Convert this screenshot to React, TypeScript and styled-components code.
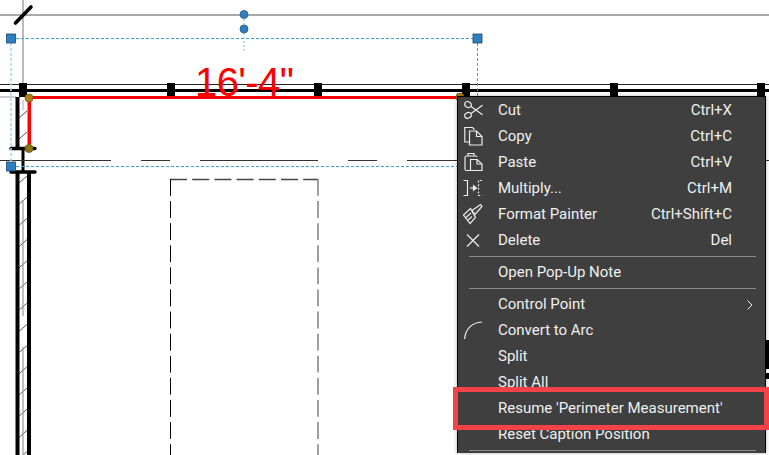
import React from 'react';
import styled, { createGlobalStyle } from 'styled-components';

const GlobalStyle = createGlobalStyle`
  html, body {
    margin: 0;
    padding: 0;
    background: #ffffff;
  }
`;

const TICKS = [19, 167, 314, 462, 610, 757];
const HATCH = Array.from({ length: 14 }, (_, i) => 176 + i * 21.2);

const FloorPlan = () => (
  <Drawing viewBox="0 0 769 455" width="769" height="455">
    {/* reference lines */}
    <line x1="0" y1="15" x2="769" y2="15" stroke="#8c8c8c" strokeWidth="1.4" />
    <line x1="23" y1="0" x2="23" y2="97" stroke="#8c8c8c" strokeWidth="1.2" />
    <line x1="15.5" y1="23" x2="31" y2="7" stroke="#000" strokeWidth="3.6" strokeLinecap="round" />

    {/* top wall */}
    <line x1="0" y1="84.5" x2="769" y2="84.5" stroke="#222" strokeWidth="1.2" />
    <line x1="0" y1="90.5" x2="769" y2="90.5" stroke="#000" strokeWidth="3" />
    <line x1="0" y1="97" x2="16" y2="97" stroke="#999" strokeWidth="1" />
    {TICKS.map((x) => (
      <rect key={x} x={x} y="83" width="8" height="14" fill="#000" />
    ))}

    {/* left wall, upper part */}
    <rect x="15.5" y="97" width="4" height="52" fill="#000" />
    <line x1="19" y1="118" x2="27" y2="111" stroke="#222" strokeWidth="0.8" />
    <line x1="19" y1="139" x2="27" y2="132" stroke="#222" strokeWidth="0.8" />
    <line x1="23" y1="100" x2="23" y2="110" stroke="#aaa" strokeWidth="1" />
    <line x1="11" y1="148.5" x2="35" y2="148.5" stroke="#000" strokeWidth="3.4" strokeLinecap="round" />
    <rect x="21.5" y="150" width="3" height="22" fill="#000" />
    <line x1="11" y1="172" x2="35" y2="172" stroke="#000" strokeWidth="3.4" strokeLinecap="round" />

    {/* left wall, lower part */}
    <rect x="15.5" y="172" width="4" height="283" fill="#000" />
    <rect x="27" y="172" width="4" height="283" fill="#000" />
    {HATCH.map((y) => (
      <line key={y} x1="19" y1={y + 7} x2="27" y2={y} stroke="#333" strokeWidth="0.8" />
    ))}
    <line x1="23" y1="200" x2="23" y2="316" stroke="#999" strokeWidth="1.2" />
    <line x1="23" y1="347" x2="23" y2="455" stroke="#999" strokeWidth="1.2" />

    {/* door swing line */}
    <line x1="0" y1="160.5" x2="769" y2="160.5" stroke="#333" strokeWidth="1" strokeDasharray="111 30 29 30 118 30 29 30" />

    {/* dashed room */}
    <line x1="170" y1="179.5" x2="318" y2="179.5" stroke="#444" strokeWidth="1.6" strokeDasharray="17 5.2" />
    <line x1="170.5" y1="179" x2="170.5" y2="455" stroke="#000" strokeWidth="1" strokeDasharray="16.8 5.3" />
    <line x1="318" y1="179" x2="318" y2="455" stroke="#888" strokeWidth="1.6" strokeDasharray="16.8 5.3" />

    {/* selection frame */}
    <line x1="11" y1="38.5" x2="477" y2="38.5" stroke="#3ba0ea" strokeWidth="1" strokeDasharray="3 2" />
    <line x1="11" y1="166.5" x2="460" y2="166.5" stroke="#3ba0ea" strokeWidth="1" strokeDasharray="3 2" />
    <line x1="11" y1="38" x2="11" y2="166" stroke="#a8d6f5" strokeWidth="1.6" strokeDasharray="3 2" />
    <line x1="477.5" y1="38" x2="477.5" y2="97" stroke="#3ba0ea" strokeWidth="1" strokeDasharray="3 2" />
    <line x1="244" y1="29" x2="244" y2="52" stroke="#9fd0f2" strokeWidth="1.4" strokeDasharray="2 2" />
    <line x1="244" y1="15" x2="244" y2="29" stroke="#9fd0f2" strokeWidth="1.4" strokeDasharray="2 2" />
    <rect x="6.5" y="34" width="9" height="9" fill="#2f7fc0" stroke="#16466d" strokeWidth="0.8" />
    <rect x="473" y="34" width="9" height="9" fill="#2f7fc0" stroke="#16466d" strokeWidth="0.8" />
    <rect x="6.5" y="162" width="9" height="9" fill="#2f7fc0" stroke="#16466d" strokeWidth="0.8" />
    <circle cx="244" cy="14.5" r="4" fill="#2f7fc0" stroke="#1f5c8c" strokeWidth="0.8" />
    <circle cx="244" cy="29" r="4" fill="#2f7fc0" stroke="#1f5c8c" strokeWidth="0.8" />

    {/* measurement */}
    <line x1="29" y1="97.5" x2="460" y2="97.5" stroke="#ff0000" strokeWidth="3" />
    <rect x="27.5" y="98" width="3.5" height="50" fill="#ff0000" />
    <circle cx="29" cy="98" r="4" fill="#b27f12" stroke="#6d5a1a" strokeWidth="0.8" />
    <circle cx="29" cy="148.5" r="4" fill="#8d7412" stroke="#5d5a1a" strokeWidth="0.8" />
    <circle cx="460" cy="97" r="4" fill="#b27f12" stroke="#6d5a1a" strokeWidth="0.8" />

    {/* right side stubs */}
    <rect x="765" y="340" width="4" height="29" fill="#000" />
    <rect x="765" y="373" width="4" height="6" fill="#000" />
  </Drawing>
);

const iconProps = {
  width: 20,
  height: 20,
  viewBox: '0 0 20 20',
  fill: 'none',
  stroke: '#ececec',
  strokeWidth: 1.2,
  overflow: 'visible',
};

const CutIcon = () => (
  <svg {...iconProps}>
    <ellipse cx="4" cy="4.6" rx="3.4" ry="2.8" transform="rotate(30 4 4.6)" />
    <ellipse cx="4" cy="15.4" rx="3.4" ry="2.8" transform="rotate(-30 4 15.4)" />
    <path d="M7 6.4 18.5 14.8M7 13.6 18.5 5.2" />
  </svg>
);

const CopyIcon = () => (
  <svg {...iconProps}>
    <path d="M5.5 16H0.8V1.5H8.5L10.5 3.5" />
    <path d="M5.5 5H12.5L18 10.5V19H5.5Z" />
    <path d="M12.5 5V10.5H18" />
  </svg>
);

const PasteIcon = () => (
  <svg {...iconProps}>
    <path d="M6 18.5H2.5Q1 18.5 1 17V5.5Q1 4 2.5 4H11.5Q12.5 4 13 5" />
    <path d="M4 4V1.5H10V4" />
    <path d="M6.5 7.5H13L18 12V18.5H6.5Z" />
    <path d="M13 7.5V12H18" />
  </svg>
);

const MultiplyIcon = () => (
  <svg {...iconProps}>
    <path d="M-0.5 2.5H3.5V17.5H-0.5" />
    <path d="M6 10H10" />
    <path d="M9.5 7.8 12.5 10 9.5 12.2Z" fill="#ececec" />
    <path d="M18 2.5H14.5V17.5H18" strokeDasharray="2 1.6" />
  </svg>
);

const PainterIcon = () => (
  <svg {...iconProps}>
    <path d="M-0.5 11 6.5 4.5 11.5 13.5 6 19.5Z" />
    <path d="M2 13.5 7 9M4 16 8 12.5" />
    <path d="M8 6.5 16.5 0.5 18 2.5 11 10.5Z" />
  </svg>
);

const DeleteIcon = () => (
  <svg {...iconProps}>
    <path d="M3 4.5 15 16.5M15 4.5 3 16.5" />
  </svg>
);

const ArcIcon = () => (
  <svg {...iconProps}>
    <path d="M0.5 19C1.5 9 8 2.5 18 2" />
  </svg>
);

type MenuRow =
  | { divider: true }
  | { label: string; shortcut?: string; icon?: React.ReactNode; submenu?: boolean };

const MENU: MenuRow[] = [
  { label: 'Cut', shortcut: 'Ctrl+X', icon: <CutIcon /> },
  { label: 'Copy', shortcut: 'Ctrl+C', icon: <CopyIcon /> },
  { label: 'Paste', shortcut: 'Ctrl+V', icon: <PasteIcon /> },
  { label: 'Multiply...', shortcut: 'Ctrl+M', icon: <MultiplyIcon /> },
  { label: 'Format Painter', shortcut: 'Ctrl+Shift+C', icon: <PainterIcon /> },
  { label: 'Delete', shortcut: 'Del', icon: <DeleteIcon /> },
  { divider: true },
  { label: 'Open Pop-Up Note' },
  { divider: true },
  { label: 'Control Point', submenu: true },
  { label: 'Convert to Arc', icon: <ArcIcon /> },
  { label: 'Split' },
  { label: 'Split All' },
  { label: "Resume 'Perimeter Measurement'" },
  { label: 'Reset Caption Position' },
  { divider: true },
];

const App = () => {
  return (
    <>
      <GlobalStyle />
      <Page>
        <FloorPlan />
        <Caption>16'-4"</Caption>
        <ContextMenu>
          {MENU.map((row, index) =>
            'divider' in row ? (
              <Divider key={index} />
            ) : (
              <Item key={row.label}>
                <IconSlot>{row.icon}</IconSlot>
                <Label>{row.label}</Label>
                {row.shortcut && <Shortcut>{row.shortcut}</Shortcut>}
                {row.submenu && (
                  <Chevron viewBox="0 0 6 10" width="6" height="10">
                    <path d="M0.5 0.5 5 5 0.5 9.5" fill="none" stroke="#ececec" strokeWidth="1" />
                  </Chevron>
                )}
              </Item>
            )
          )}
        </ContextMenu>
        <Highlight />
      </Page>
    </>
  );
};

export default App;

const Page = styled.div`
  position: relative;
  width: 769px;
  height: 455px;
  overflow: hidden;
  background: #ffffff;
`;

const Drawing = styled.svg`
  display: block;
`;

const Caption = styled.span`
  position: absolute;
  left: 195px;
  top: 59px;
  font-family: 'Liberation Sans', Arial, sans-serif;
  font-size: 40px;
  line-height: 46px;
  letter-spacing: -0.6px;
  color: #ff0000;
  white-space: nowrap;
`;

const ContextMenu = styled.div`
  position: absolute;
  left: 457px;
  top: 96px;
  width: 307px;
  display: flex;
  flex-direction: column;
  background: #3f3f3f;
  border: 1px solid #000000;
  border-bottom: none;
  box-shadow: 0 0 4px rgba(0, 0, 0, 0.3);
  font-family: Roboto, 'Liberation Sans', sans-serif;
  font-size: 15px;
  color: #f0f0f0;
`;

const Item = styled.div`
  position: relative;
  display: flex;
  align-items: center;
  height: 26px;
  padding-right: 33px;
`;

const IconSlot = styled.span`
  width: 40px;
  flex: none;
  display: flex;
  align-items: center;
  padding-left: 6px;
  box-sizing: border-box;
`;

const Label = styled.span`
  flex: 1;
  white-space: nowrap;
`;

const Shortcut = styled.span`
  white-space: nowrap;
`;

const Chevron = styled.svg`
  position: absolute;
  right: 12px;
  top: 9px;
`;

const Divider = styled.div`
  height: 1px;
  margin: 3px 9px 2px 11px;
  background: #8a8a8a;
`;

const Highlight = styled.div`
  position: absolute;
  left: 453px;
  top: 387px;
  width: 316px;
  height: 43px;
  box-sizing: border-box;
  border: 5px solid #f44248;
`;
